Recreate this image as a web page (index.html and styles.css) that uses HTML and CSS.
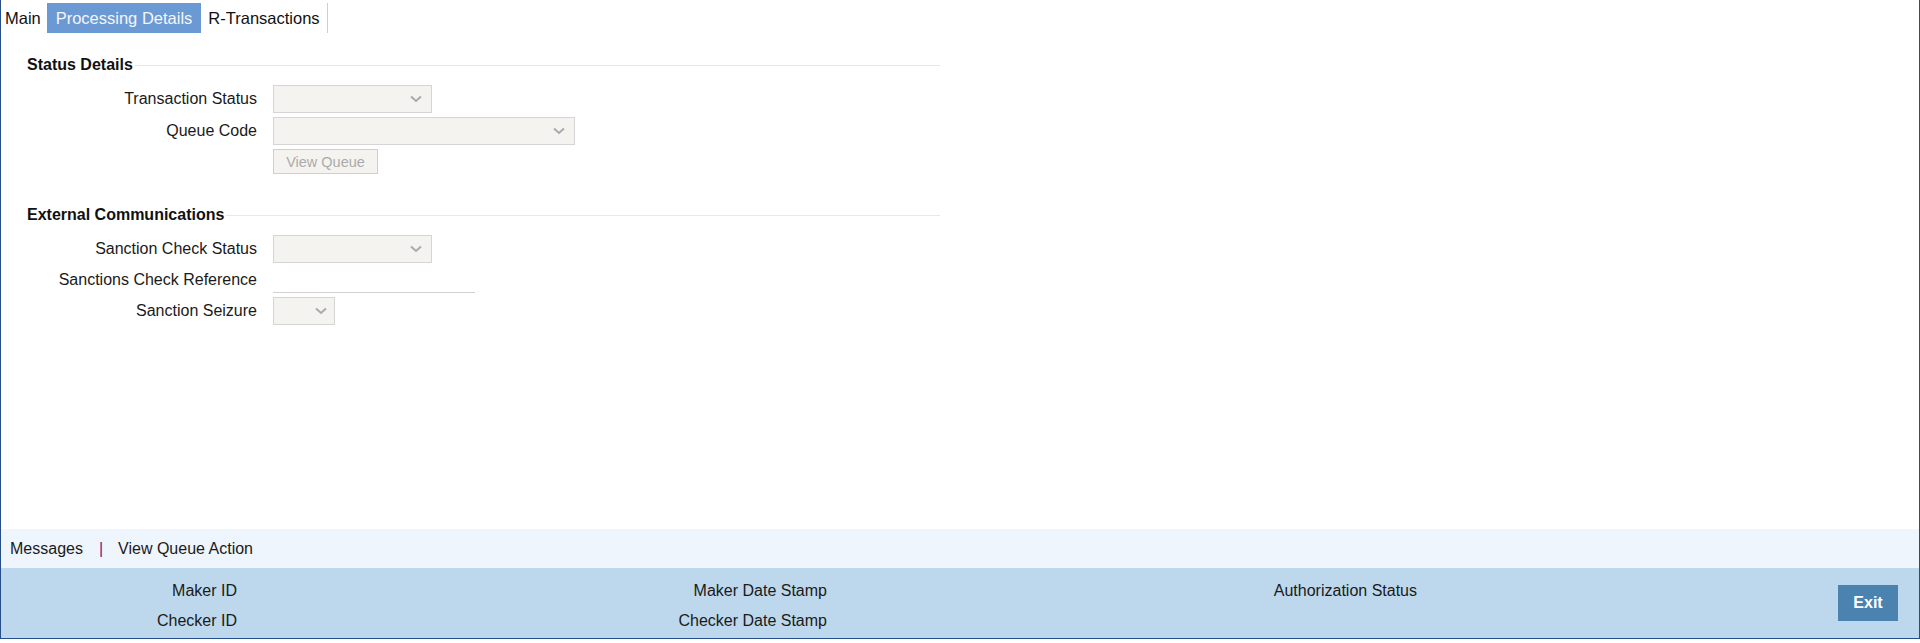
FILE: index.html
```html
<!DOCTYPE html>
<html lang="en">
<head>
<meta charset="utf-8">
<title>Processing Details</title>
<link rel="stylesheet" href="styles.css">
</head>
<body>
<div class="window">
  <div class="tabs">
    <span class="tab first">Main</span><span class="tab active">Processing Details</span><span class="tab last">R-Transactions</span>
  </div>
  <div class="content">
    <section class="group">
      <div class="legend"><h2>Status Details</h2><span class="rule"></span></div>
      <div class="row"><span class="label">Transaction Status</span><div class="select w-md"><svg class="chev" width="12" height="8" viewBox="0 0 12 8"><polyline points="1,1.5 6,6 11,1.5" fill="none" stroke="#a3acb1" stroke-width="2"/></svg></div></div>
      <div class="row"><span class="label">Queue Code</span><div class="select w-lg"><svg class="chev" width="12" height="8" viewBox="0 0 12 8"><polyline points="1,1.5 6,6 11,1.5" fill="none" stroke="#a3acb1" stroke-width="2"/></svg></div></div>
      <div class="row short"><span class="label"></span><button class="btn" disabled>View Queue</button></div>
    </section>
    <section class="group second">
      <div class="legend"><h2>External Communications</h2><span class="rule"></span></div>
      <div class="row"><span class="label">Sanction Check Status</span><div class="select w-md"><svg class="chev" width="12" height="8" viewBox="0 0 12 8"><polyline points="1,1.5 6,6 11,1.5" fill="none" stroke="#a3acb1" stroke-width="2"/></svg></div></div>
      <div class="row text"><span class="label">Sanctions Check Reference</span><div class="input"></div></div>
      <div class="row"><span class="label">Sanction Seizure</span><div class="select w-sm"><svg class="chev" width="12" height="8" viewBox="0 0 12 8"><polyline points="1,1.5 6,6 11,1.5" fill="none" stroke="#a3acb1" stroke-width="2"/></svg></div></div>
    </section>
  </div>
  <div class="msgbar">
    <span class="link">Messages</span><span class="sep">|</span><span class="link">View Queue Action</span>
  </div>
  <div class="audit">
    <div class="audit-grid">
      <span class="alabel">Maker ID</span>
      <span class="alabel">Maker Date Stamp</span>
      <span class="alabel">Authorization Status</span>
      <span class="alabel">Checker ID</span>
      <span class="alabel">Checker Date Stamp</span>
      <span class="alabel"></span>
    </div>
    <button class="exit">Exit</button>
  </div>
</div>
</body>
</html>
```

FILE: styles.css
```css
html, body {
  margin: 0;
  padding: 0;
  background: #ffffff;
}
body {
  font-family: "Liberation Sans", Arial, sans-serif;
  font-size: 16px;
  color: #1a1a1a;
}
.window {
  box-sizing: border-box;
  width: 1920px;
  height: 639px;
  border-left: 1px solid #284e89;
  border-right: 1px solid #284e89;
  border-bottom: 1px solid #284e89;
  display: flex;
  flex-direction: column;
}
.tabs {
  display: flex;
  margin-top: 3px;
  height: 30px;
}
.tab {
  display: flex;
  align-items: center;
  justify-content: center;
  font-size: 16.5px;
  color: #111;
  white-space: nowrap;
}
.tab.first {
  width: 46px;
  justify-content: flex-start;
  padding-left: 4px;
  box-sizing: border-box;
}
.tab.active {
  width: 154px;
  background: #6b99d4;
  color: #f4f6fa;
}
.tab.last {
  width: 126px;
  border-right: 1px solid #cfcfcf;
}
.content {
  flex: 1;
  padding-top: 22px;
}
.group {
  width: 939px;
  display: flex;
  flex-direction: column;
  gap: 4px;
}
.group.second {
  margin-top: 31px;
}
.legend {
  display: flex;
  align-items: center;
  height: 20px;
  padding-left: 26px;
  margin-bottom: 6px;
}
.legend h2 {
  margin: 0;
  font-size: 16px;
  font-weight: bold;
  color: #111;
}
.rule {
  flex: 1;
  border-top: 1px solid #e6e8ea;
  margin-left: 2px;
}
.row {
  display: flex;
  align-items: center;
  height: 28px;
}
.row.short {
  height: 25px;
}
.row.text {
  height: 26px;
}
.label {
  width: 256px;
  margin-right: 16px;
  text-align: right;
  white-space: nowrap;
}
.select {
  box-sizing: border-box;
  height: 28px;
  background: #f4f3f0;
  border: 1px solid #d5d5d5;
  display: flex;
  align-items: center;
  justify-content: flex-end;
  padding-right: 9px;
}
.w-md { width: 159px; }
.w-lg { width: 302px; }
.w-sm { width: 62px; padding-right: 7px; }
.chev {
  display: block;
}
.btn {
  box-sizing: border-box;
  width: 105px;
  height: 25px;
  margin: 0;
  padding: 0;
  background: #f4f3f0;
  border: 1px solid #cfcfcf;
  color: #ababab;
  font-family: "Liberation Sans", Arial, sans-serif;
  font-size: 14.5px;
}
.input {
  box-sizing: border-box;
  width: 202px;
  height: 26px;
  border-bottom: 1px solid #d0d0d0;
}
.msgbar {
  height: 39px;
  background: #eef5fd;
  display: flex;
  align-items: center;
  padding-left: 9px;
}
.sep {
  color: #6b2080;
  margin: 0 15px 0 16px;
}
.audit {
  height: 70px;
  background: #bdd8ec;
  display: flex;
  align-items: center;
}
.audit-grid {
  flex: 1;
  align-self: flex-start;
  padding-top: 8px;
  display: grid;
  grid-template-columns: 590px 590px 590px;
  grid-auto-rows: 30px;
}
.alabel {
  width: 236px;
  text-align: right;
  display: flex;
  align-items: center;
  justify-content: flex-end;
  white-space: nowrap;
}
.exit {
  width: 60px;
  height: 36px;
  margin: 0 21px 0 0;
  padding: 0;
  border: none;
  background: #4a83b0;
  color: #ffffff;
  font-family: "Liberation Sans", Arial, sans-serif;
  font-size: 16px;
  font-weight: bold;
}
```
